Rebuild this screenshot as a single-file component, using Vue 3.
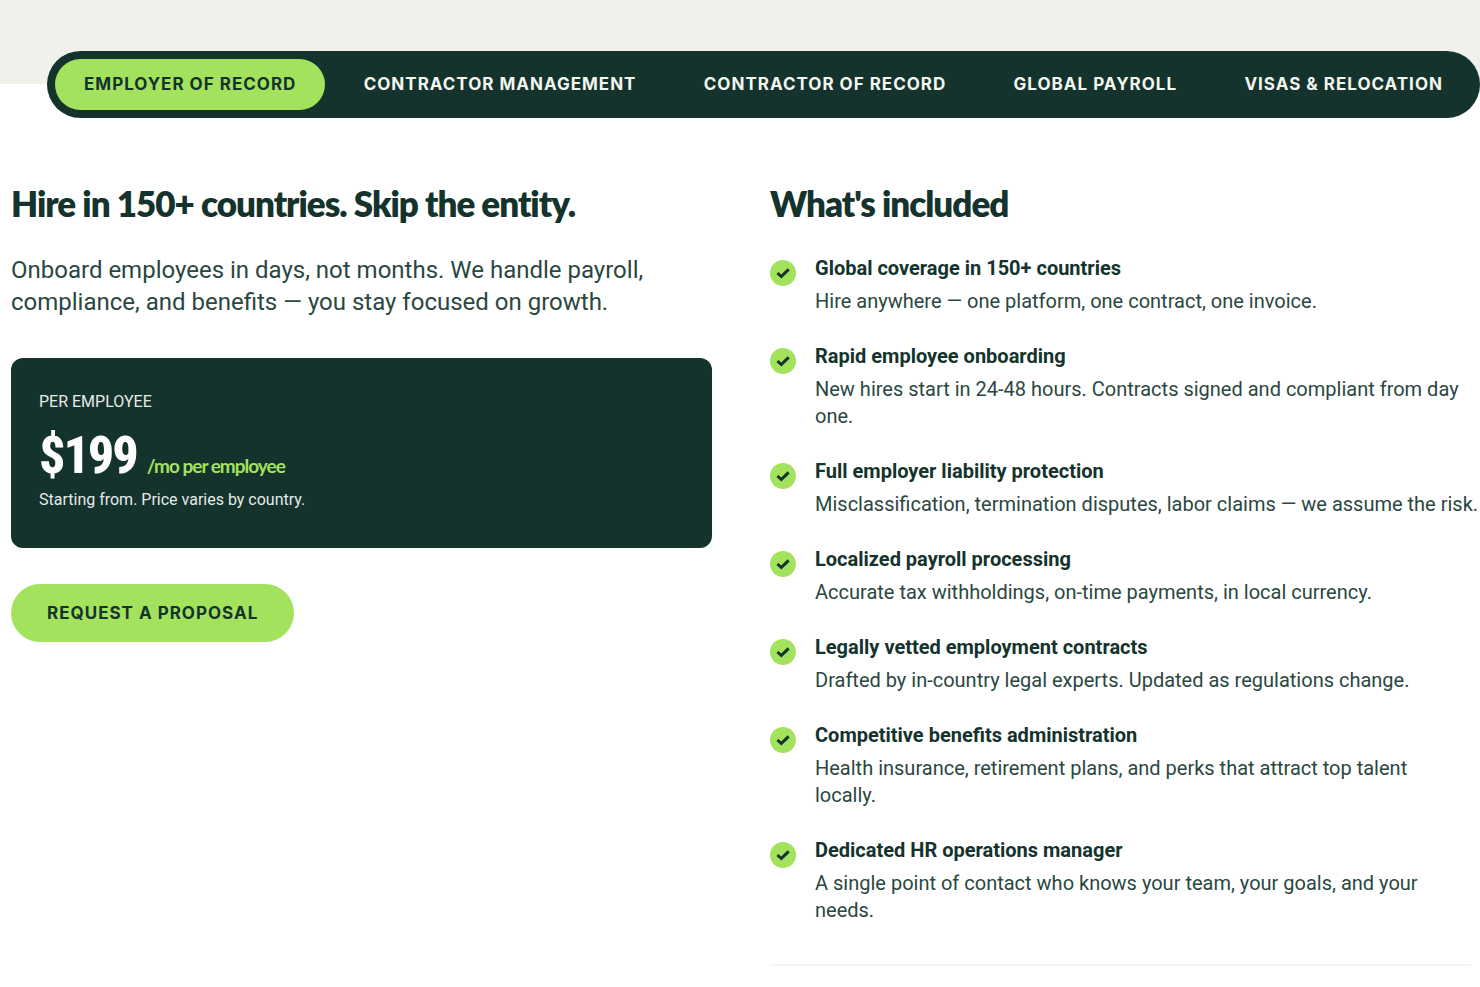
<script setup>
import { ref } from 'vue'

const tabs = [
  'Employer of Record',
  'Contractor Management',
  'Contractor of Record',
  'Global Payroll',
  'Visas & Relocation',
]
const active = ref(0)

const features = [
  { title: 'Global coverage in 150+ countries', text: 'Hire anywhere — one platform, one contract, one invoice.' },
  { title: 'Rapid employee onboarding', text: 'New hires start in 24-48 hours. Contracts signed and compliant from day\none.' },
  { title: 'Full employer liability protection', text: 'Misclassification, termination disputes, labor claims — we assume the risk.' },
  { title: 'Localized payroll processing', text: 'Accurate tax withholdings, on-time payments, in local currency.' },
  { title: 'Legally vetted employment contracts', text: 'Drafted by in-country legal experts. Updated as regulations change.' },
  { title: 'Competitive benefits administration', text: 'Health insurance, retirement plans, and perks that attract top talent\nlocally.' },
  { title: 'Dedicated HR operations manager', text: 'A single point of contact who knows your team, your goals, and your\nneeds.' },
]
</script>

<template>
  <main class="page">
    <div class="band">
      <nav class="tabs" role="tablist" aria-label="Services">
        <button
          v-for="(tab, i) in tabs"
          :key="tab"
          type="button"
          role="tab"
          class="tab"
          :class="{ active: i === active }"
          :aria-selected="i === active"
          @click="active = i"
        >{{ tab }}</button>
      </nav>
    </div>

    <div class="columns">
      <section class="pitch">
        <h2 class="heading">Hire in 150+ countries. Skip the entity.</h2>
        <p class="lead">Onboard employees in days, not months. We handle payroll, compliance, and benefits — you stay focused on growth.</p>
        <div class="price-card">
          <p class="label">Per employee</p>
          <p class="price"><span class="amount">$199</span><span class="unit">/mo per employee</span></p>
          <p class="note">Starting from. Price varies by country.</p>
        </div>
        <a class="cta" href="#proposal">Request a proposal</a>
      </section>

      <section class="included">
        <h2 class="heading">What's included</h2>
        <ul class="features">
          <li v-for="f in features" :key="f.title" class="feature">
            <svg class="check" viewBox="0 0 26 26" aria-hidden="true">
              <circle cx="13" cy="13" r="13" fill="#a3e25c" />
              <path d="M7.4 13l3.9 3.5 7.4-7.2" fill="none" stroke="#14332d" stroke-width="3" />
            </svg>
            <div class="feature-body">
              <h3 class="feature-title">{{ f.title }}</h3>
              <p class="feature-text">{{ f.text }}</p>
            </div>
          </li>
        </ul>
      </section>
    </div>
  </main>
</template>

<style>
body {
  margin: 0;
  background: #fff;
}
</style>

<style scoped>
.page {
  font-family: Roboto, "Liberation Sans", sans-serif;
  color: #14332d;
}

h2,
h3,
p,
ul {
  margin: 0;
  padding: 0;
}

.band {
  padding: 51px 0 0 47px;
  background: linear-gradient(#f1f1eb 84px, #fff 84px);
}

.tabs {
  display: flex;
  justify-content: space-between;
  padding: 8px;
  border-radius: 34px;
  background: #14332d;
}

.tab {
  padding: 0 29px;
  border: 0;
  border-radius: 26px;
  background: transparent;
  color: #f4f6f0;
  font-family: Inter, "Liberation Sans", sans-serif;
  font-size: 17px;
  font-weight: 700;
  line-height: 51px;
  letter-spacing: 1px;
  text-transform: uppercase;
  white-space: nowrap;
  cursor: pointer;
}

.tab.active {
  background: #a3e25c;
  color: #14332d;
}

.columns {
  display: grid;
  grid-template-columns: 1fr 1fr;
  gap: 58px;
  padding: 63px 9px 0 11px;
}

.heading {
  font-family: Lato, "Liberation Sans", sans-serif;
  font-size: 35px;
  font-weight: 800;
  line-height: 44px;
  letter-spacing: -1px;
}

.lead {
  margin-top: 29px;
  color: #2a4741;
  font-size: 24px;
  line-height: 32px;
}

.price-card {
  margin-top: 40px;
  padding: 32px 28px 36px;
  border-radius: 12px;
  background: #14332d;
  color: #e6eae8;
}

.label {
  font-size: 16px;
  line-height: 24px;
  text-transform: uppercase;
}

.price {
  display: flex;
  align-items: baseline;
  gap: 10px;
  margin-top: 10px;
}

.amount {
  color: #fff;
  font-family: "Roboto Condensed", Roboto, sans-serif;
  font-size: 52px;
  font-weight: 800;
  line-height: 64px;
  letter-spacing: -2px;
}

.unit {
  color: #a3e25c;
  font-family: Lato, "Liberation Sans", sans-serif;
  font-size: 19px;
  font-weight: 700;
  line-height: 24px;
  letter-spacing: -1px;
}

.note {
  font-size: 16px;
  line-height: 24px;
}

.cta {
  display: inline-block;
  margin-top: 36px;
  padding: 0 36px;
  border-radius: 29px;
  background: #a3e25c;
  color: #14332d;
  font-family: Inter, "Liberation Sans", sans-serif;
  font-size: 17px;
  font-weight: 700;
  line-height: 58px;
  letter-spacing: 1px;
  text-decoration: none;
  text-transform: uppercase;
}

.features {
  display: grid;
  gap: 28px;
  margin-top: 30px;
  padding-bottom: 40px;
  border-bottom: 2px solid #f6f6f1;
  list-style: none;
}

.feature {
  display: flex;
  gap: 19px;
  margin-right: -8px;
}

.check {
  flex: none;
  width: 26px;
  height: 26px;
  margin-top: 5px;
}

.feature-body {
  flex: 1;
}

.feature-title {
  font-size: 20px;
  font-weight: 700;
  line-height: 27px;
}

.feature-text {
  margin-top: 6px;
  color: #2a4741;
  font-size: 20px;
  line-height: 27px;
  white-space: pre-line;
}
</style>
